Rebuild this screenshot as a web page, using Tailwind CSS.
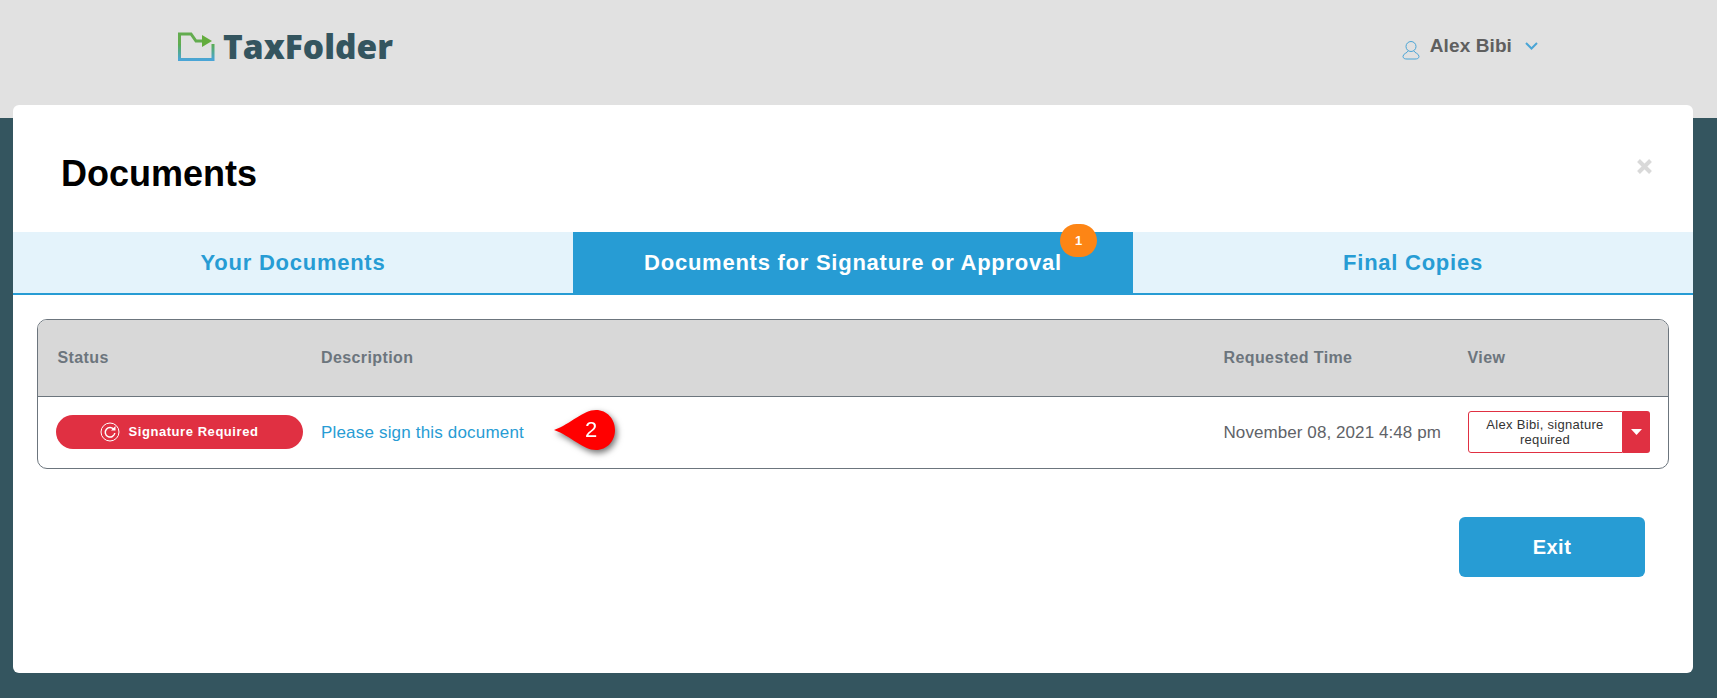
<!DOCTYPE html>
<html lang="en">
<head>
    <meta charset="UTF-8">
    <title>TaxFolder - Documents</title>
    <script src="https://cdn.jsdelivr.net/npm/@tailwindcss/browser@4"></script>
</head>
<body class="bg-[#34555f] font-['Liberation_Sans',Arial,sans-serif] overflow-hidden">
    <div class="h-[698px]">
        <!-- Top bar -->
        <header class="bg-[#e1e1e1] h-[118px] flex items-start justify-between pl-[178px] pr-[179px]">
            <div class="flex items-center gap-[8px] pt-[30px]">
                <svg width="37" height="30" viewBox="0 0 37 30" fill="none">
                    <defs>
                        <linearGradient id="logoGrad" x1="0" y1="0" x2="0" y2="1">
                            <stop offset="0" stop-color="#5aad4e"/>
                            <stop offset="1" stop-color="#4aa5d6"/>
                        </linearGradient>
                    </defs>
                    <path d="M1.5 20 V2 H13 L18 9 H24" stroke="#63ac4f" stroke-width="3"/>
                    <path d="M1.5 12 V27.5 H35 V12" stroke="url(#logoGrad)" stroke-width="3"/>
                    <path d="M24 3 L34 9 L24 15 Z" fill="#63ac3c"/>
                </svg>
                <span class="font-['Open_Sans',sans-serif] font-extrabold text-[33.5px] leading-none text-[#34555f]">TaxFolder</span>
            </div>
            <div class="flex items-center pt-[32px]">
                <svg class="mt-[8px]" width="18" height="20" viewBox="0 0 18 20" fill="none" stroke="#4aa5d6" stroke-width="1">
                    <circle cx="9" cy="6.5" r="5"/>
                    <path d="M6 11 C5.5 13 1 13.5 1 16.5 C1 18.5 3 19 5 19 H13 C15 19 17 18.5 17 16.5 C17 13.5 12.5 13 12 11"/>
                </svg>
                <span class="ml-[10px] text-[19px] tracking-[0.1px] font-bold text-[#5f5f5f] leading-[20px]">Alex Bibi</span>
                <svg class="ml-[13px]" width="13" height="8" viewBox="0 0 13 8" fill="none" stroke="#4aa5d6" stroke-width="2">
                    <path d="M1 1 L6.5 6.5 L12 1"/>
                </svg>
            </div>
        </header>

        <!-- Modal -->
        <main class="relative -mt-[13px] mx-[13px] w-[1680px] h-[568px] bg-white rounded-[6px]">
            <div class="h-[127px] pl-[48px] pr-[41px] flex items-start justify-between">
                <h1 class="pt-[48px] text-[36px] leading-[42px] font-bold text-black">Documents</h1>
                <svg class="mt-[54px]" width="15" height="15" viewBox="0 0 15 15" stroke="#d9d9d9" stroke-width="4">
                    <path d="M1.5 1.5 L13.5 13.5 M13.5 1.5 L1.5 13.5"/>
                </svg>
            </div>

            <!-- Tabs -->
            <div class="grid grid-cols-3 h-[63px] border-b-2 border-[#279cd4] bg-[#e4f3fb] text-[22px] font-bold tracking-[0.75px]">
                <div class="flex items-center justify-center text-[#279cd4] pb-[1px]">Your Documents</div>
                <div class="relative flex items-center justify-center bg-[#279cd4] text-white pb-[1px]">
                    Documents for Signature or Approval
                    <span class="absolute -top-[8px] left-[487px] w-[37px] h-[33px] rounded-full bg-[#fd8515] text-white text-[13px] tracking-normal flex items-center justify-center">1</span>
                </div>
                <div class="flex items-center justify-center text-[#279cd4] pb-[1px]">Final Copies</div>
            </div>

            <!-- Table -->
            <div class="mx-[24px] mt-[24px] w-[1632px] h-[150px] border border-[#6c757d] rounded-[10px] overflow-hidden">
                <div class="grid grid-cols-[263.5px_902.5px_244px_1fr] h-[77px] bg-[#d8d8d8] border-b border-[#6c757d] pl-[19.5px] pt-[29px] text-[16px] leading-[18px] font-bold text-[#6c757d] tracking-[0.4px]">
                    <div>Status</div>
                    <div>Description</div>
                    <div>Requested Time</div>
                    <div>View</div>
                </div>
                <div class="grid grid-cols-[265.5px_902.5px_244px_1fr] items-center h-[71px] pl-[17.5px] pb-[2px]">
                    <div class="flex items-center justify-center w-[247px] h-[34px] rounded-full bg-[#e03042] text-white text-[13px] font-bold tracking-[0.55px]">
                        <svg class="mr-[9px]" width="20" height="20" viewBox="0 0 20 20" fill="none" stroke="white">
                            <circle cx="10" cy="10" r="9"/>
                            <path d="M14 7.5 A4.8 4.8 0 1 0 14.8 11" stroke-width="1.5"/>
                            <path d="M11 8.5 H15.5 V4 Z" fill="white" stroke="none"/>
                        </svg>
                        Signature Required
                    </div>
                    <div class="relative">
                        <a class="text-[17px] text-[#279cd4] tracking-[0.18px] relative top-[1px]">Please sign this document</a>
                        <!-- Callout marker -->
                        <div class="absolute left-[232px] -top-[9px] w-[64px] h-[40px] drop-shadow-[2px_3px_3px_rgba(0,0,0,0.55)]">
                            <svg class="absolute inset-0" width="64" height="40" viewBox="0 0 64 40">
                                <path d="M1 20 C18 14 30 0 43 0 C54 0 62 9 62 20 C62 31 54 40 43 40 C30 40 18 26 1 20 Z" fill="#ff0000"/>
                            </svg>
                            <span class="absolute left-[27px] top-0 w-[22px] h-[40px] flex items-center justify-center text-white text-[22px]">2</span>
                        </div>
                    </div>
                    <div class="text-[17px] text-[#5f6368] tracking-[0.08px] relative top-[1px]">November 08, 2021 4:48 pm</div>
                    <div class="flex w-[182px] h-[42px]">
                        <div class="flex-1 border border-[#e03042] rounded-l-[3px] flex items-center justify-center text-center text-[13px] leading-[15px] text-[#333] tracking-[0.3px] px-[6px]">Alex Bibi, signature required</div>
                        <div class="w-[27px] bg-[#e03042] rounded-r-[3px] flex items-center justify-center">
                            <svg width="11" height="6" viewBox="0 0 11 6"><path d="M0 0 H11 L5.5 6 Z" fill="white"/></svg>
                        </div>
                    </div>
                </div>
            </div>

            <!-- Footer -->
            <div class="flex justify-end pr-[48px] mt-[48px]">
                <button class="w-[186px] h-[60px] bg-[#279cd4] rounded-[6px] text-white text-[20px] font-bold tracking-[0.5px]">Exit</button>
            </div>
        </main>
    </div>
</body>
</html>
